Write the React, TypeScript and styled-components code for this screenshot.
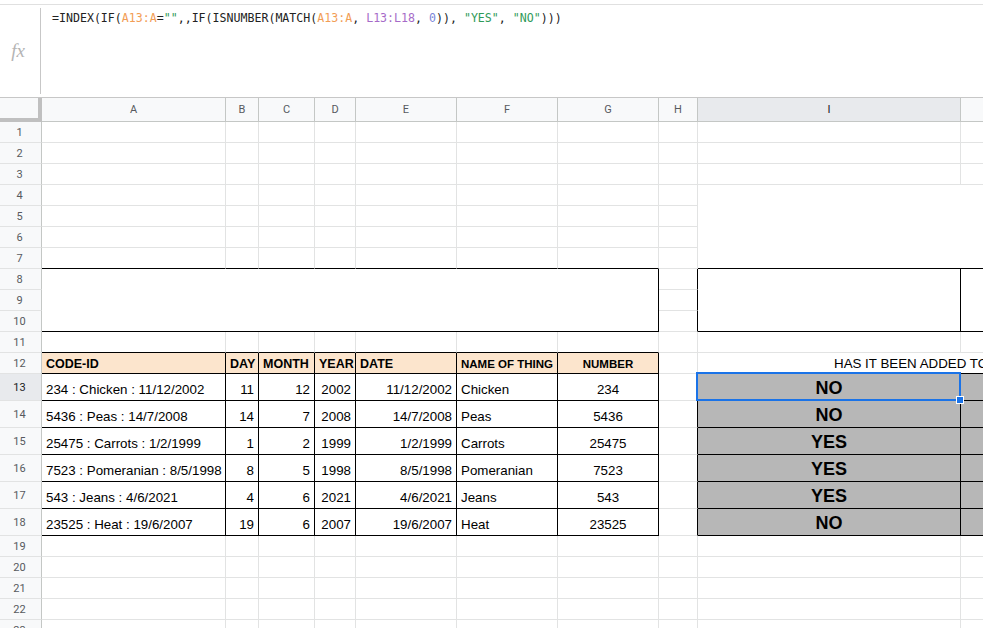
import React from "react";
import styled, { createGlobalStyle } from "styled-components";

const GlobalStyle = createGlobalStyle`
  html, body {
    margin: 0;
    padding: 0;
    background: #ffffff;
    overflow: hidden;
  }
  body {
    font-family: "Liberation Sans", Arial, sans-serif;
  }
`;

const COL_WIDTHS = [42, 184, 33, 56, 41, 101, 101, 101, 39, 263, 140];
const COL_LETTERS = ["A", "B", "C", "D", "E", "F", "G", "H", "I", "J"];
const ROW_COUNT = 23;
const rowHeight = (r: number) => (r >= 13 && r <= 18 ? 27 : 21);

const GRID = "#e2e3e3";
const HEAD_LINE = "#c4c7c5";
const BLUE = "#1a73e8";

const Page = styled.div`
  width: 983px;
  height: 628px;
  overflow: hidden;
  display: flex;
  flex-direction: column;
`;

const FormulaBar = styled.div`
  flex-shrink: 0;
  margin-top: 4px;
  height: 94px;
  box-sizing: border-box;
  border-top: 1px solid #e0e0e0;
  border-bottom: 1px solid #c7c7c7;
  display: flex;
`;

const FxLabel = styled.div`
  width: 41px;
  box-sizing: border-box;
  margin: 3px 0 3px;
  border-right: 1px solid #c7c7c7;
  display: flex;
  align-items: center;
  justify-content: center;
  font-family: "Liberation Serif", "DejaVu Serif", serif;
  font-style: italic;
  font-size: 19px;
  color: #b4b4b4;
  padding-right: 4px;
`;

const FormulaText = styled.div`
  padding: 5px 0 0 11px;
  font-family: "DejaVu Sans Mono", "Liberation Mono", monospace;
  font-size: 11.6px;
  line-height: 16px;
  color: #222222;
  white-space: pre;
`;

const Token = styled.span<{ $color: string }>`
  color: ${(p) => p.$color};
`;

const SheetGrid = styled.div`
  flex-shrink: 0;
  display: grid;
  grid-template-columns: ${COL_WIDTHS.map((w) => `${w}px`).join(" ")};
  grid-template-rows: 24px ${Array.from({ length: ROW_COUNT }, (_, i) => `${rowHeight(i + 1)}px`).join(" ")};
  width: ${COL_WIDTHS.reduce((a, b) => a + b, 0)}px;
`;

const Corner = styled.div`
  box-sizing: border-box;
  background: #f8f9fa;
  border-right: 4px solid #c0c0c0;
  border-bottom: 4px solid #c0c0c0;
`;

const ColHeader = styled.div<{ $active?: boolean }>`
  box-sizing: border-box;
  background: ${(p) => (p.$active ? "#e8eaed" : "#f8f9fa")};
  border-right: 1px solid ${HEAD_LINE};
  border-bottom: 1px solid ${HEAD_LINE};
  display: flex;
  align-items: center;
  justify-content: center;
  font-family: Roboto, "Liberation Sans", sans-serif;
  font-size: 11px;
  color: ${(p) => (p.$active ? "#202124" : "#575a5e")};
`;

const RowHeader = styled.div<{ $active?: boolean }>`
  box-sizing: border-box;
  background: ${(p) => (p.$active ? "#e8eaed" : "#f8f9fa")};
  border-right: 1px solid ${HEAD_LINE};
  border-bottom: 1px solid ${GRID};
  display: flex;
  align-items: center;
  justify-content: center;
  padding-right: 2px;
  font-family: Roboto, "Liberation Sans", sans-serif;
  font-size: 11px;
  color: ${(p) => (p.$active ? "#202124" : "#575a5e")};
`;

const Cell = styled.div<{
  $right: boolean;
  $bottom: boolean;
  $bg?: string;
  $align?: "left" | "right" | "center";
  $bold?: boolean;
  $size?: number;
  $inset?: number;
  $pad?: number;
}>`
  position: relative;
  box-sizing: border-box;
  overflow: hidden;
  white-space: nowrap;
  background: ${(p) => p.$bg || "#ffffff"};
  border-right: 1px solid ${(p) => (p.$right ? "#000000" : GRID)};
  border-bottom: 1px solid ${(p) => (p.$bottom ? "#000000" : GRID)};
  display: flex;
  align-items: flex-end;
  justify-content: ${(p) =>
    p.$align === "right" ? "flex-end" : p.$align === "center" ? "center" : "flex-start"};
  padding: 0 4px ${(p) => (p.$pad !== undefined ? p.$pad : 3)}px
    ${(p) => (p.$inset !== undefined ? p.$inset : 4)}px;
  font-family: "Liberation Sans", Arial, sans-serif;
  font-size: ${(p) => p.$size || 13.33}px;
  font-weight: ${(p) => (p.$bold ? 700 : 400)};
  color: #000000;
  line-height: 1.15;
`;

const SelectedCell = styled(Cell)`
  overflow: visible;
  z-index: 2;
`;

const Selection = styled.div`
  position: absolute;
  top: -2px;
  left: -2px;
  right: -1px;
  bottom: -1px;
  border: 2px solid ${BLUE};
  pointer-events: none;
`;

const Handle = styled.div`
  position: absolute;
  right: -5px;
  bottom: -5px;
  width: 6px;
  height: 6px;
  background: ${BLUE};
  border: 1px solid #ffffff;
`;

type Merge = { r0: number; c0: number; r1: number; c1: number };

// merged ranges (rows 1-based, cols 0 = A)
const MERGES: Merge[] = [
  { r0: 8, c0: 0, r1: 10, c1: 6 },
  { r0: 4, c0: 8, r1: 7, c1: 9 },
  { r0: 8, c0: 8, r1: 10, c1: 8 },
  { r0: 8, c0: 9, r1: 10, c1: 9 },
  { r0: 12, c0: 8, r1: 12, c1: 9 },
];

const bordered = (r: number, c: number) =>
  (r >= 8 && r <= 10 && c <= 6) ||
  (r >= 12 && r <= 18 && c <= 6) ||
  (r >= 8 && r <= 10 && (c === 8 || c === 9)) ||
  (r >= 13 && r <= 18 && (c === 8 || c === 9));

const mergeAt = (r: number, c: number) =>
  MERGES.find((m) => r >= m.r0 && r <= m.r1 && c >= m.c0 && c <= m.c1);

const HEADINGS = ["CODE-ID", "DAY", "MONTH", "YEAR", "DATE", "NAME OF THING", "NUMBER"];

const ROWS = [
  { code: "234 : Chicken : 11/12/2002", day: 11, month: 12, year: 2002, date: "11/12/2002", name: "Chicken", num: 234, added: "NO" },
  { code: "5436 : Peas : 14/7/2008", day: 14, month: 7, year: 2008, date: "14/7/2008", name: "Peas", num: 5436, added: "NO" },
  { code: "25475 : Carrots : 1/2/1999", day: 1, month: 2, year: 1999, date: "1/2/1999", name: "Carrots", num: 25475, added: "YES" },
  { code: "7523 : Pomeranian : 8/5/1998", day: 8, month: 5, year: 1998, date: "8/5/1998", name: "Pomeranian", num: 7523, added: "YES" },
  { code: "543 : Jeans : 4/6/2021", day: 4, month: 6, year: 2021, date: "4/6/2021", name: "Jeans", num: 543, added: "YES" },
  { code: "23525 : Heat : 19/6/2007", day: 19, month: 6, year: 2007, date: "19/6/2007", name: "Heat", num: 23525, added: "NO" },
];

const cellContent = (r: number, c: number): React.ReactNode => {
  if (r === 12 && c <= 6) return HEADINGS[c];
  if (r === 12 && c === 8) return "HAS IT BEEN ADDED TO THE LIST?";
  if (r >= 13 && r <= 18) {
    const d = ROWS[r - 13];
    const vals = [d.code, d.day, d.month, d.year, d.date, d.name, d.num];
    if (c <= 6) return vals[c];
    if (c === 8) return d.added;
  }
  return null;
};

const cellStyle = (r: number, c: number) => {
  if (r === 12 && c <= 6) {
    return {
      $bg: "#fce5cd",
      $bold: true,
      $size: c >= 5 ? 11.5 : 12.5,
      $align: c === 6 ? "center" : "left",
      $pad: 2,
    } as const;
  }
  if (r === 12 && c === 8) return { $inset: 136, $pad: 2 } as const;
  if (r >= 13 && r <= 18 && c <= 6) {
    const align = c === 0 || c === 5 ? "left" : c === 6 ? "center" : "right";
    return { $align: align } as const;
  }
  if (r >= 13 && r <= 18 && (c === 8 || c === 9)) {
    return { $bg: "#b7b7b7", $bold: true, $size: 18, $align: "center", $pad: 1 } as const;
  }
  return {};
};

const Formula = () => (
  <FormulaText>
    =INDEX(IF(<Token $color="#f29d55">A13:A</Token>=
    <Token $color="#2f9a58">""</Token>,,IF(ISNUMBER(MATCH(
    <Token $color="#f29d55">A13:A</Token>, <Token $color="#a66bc8">L13:L18</Token>,{" "}
    <Token $color="#7a86d8">0</Token>)), <Token $color="#2f9a58">"YES"</Token>,{" "}
    <Token $color="#2f9a58">"NO"</Token>)))
  </FormulaText>
);

const App: React.FC = () => {
  const cells: React.ReactNode[] = [];

  cells.push(<Corner key="corner" />);
  COL_LETTERS.forEach((l, i) => (
    cells.push(
      <ColHeader key={`h-${l}`} $active={i === 8}>
        {l}
      </ColHeader>
    )
  ));

  for (let r = 1; r <= ROW_COUNT; r++) {
    cells.push(
      <RowHeader key={`r-${r}`} $active={r === 13}>
        {r}
      </RowHeader>
    );
    for (let c = 0; c < COL_LETTERS.length; c++) {
      const m = mergeAt(r, c);
      if (m && (m.r0 !== r || m.c0 !== c)) continue;
      const r1 = m ? m.r1 : r;
      const c1 = m ? m.c1 : c;
      const own = bordered(r, c);
      const right = own || bordered(r, c1 + 1);
      const bottom = own || bordered(r1 + 1, c);
      const span = m
        ? { gridColumn: `span ${c1 - c + 1}`, gridRow: `span ${r1 - r + 1}` }
        : undefined;
      const props = { $right: right, $bottom: bottom, ...cellStyle(r, c) };
      const content = cellContent(r, c);

      if (r === 13 && c === 8) {
        cells.push(
          <SelectedCell key={`${r}-${c}`} {...props}>
            {content}
            <Selection>
              <Handle />
            </Selection>
          </SelectedCell>
        );
      } else {
        cells.push(
          <Cell key={`${r}-${c}`} style={span} {...props}>
            {content}
          </Cell>
        );
      }
    }
  }

  return (
    <Page>
      <GlobalStyle />
      <FormulaBar>
        <FxLabel>fx</FxLabel>
        <Formula />
      </FormulaBar>
      <SheetGrid>{cells}</SheetGrid>
    </Page>
  );
};

export default App;
